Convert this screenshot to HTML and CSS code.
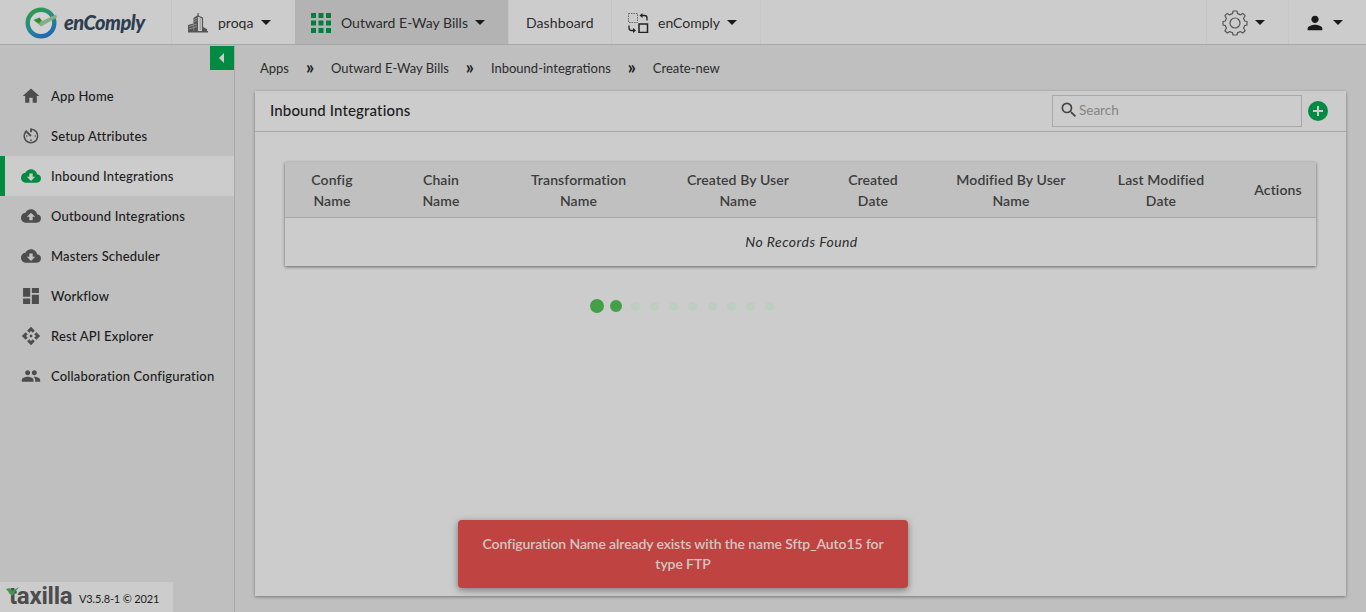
FILE: index.html
```html
<!DOCTYPE html>
<html lang="en">
<head>
<meta charset="utf-8">
<title>Inbound Integrations</title>
<link rel="stylesheet" href="styles.css">
</head>
<body>
<svg class="defs" width="0" height="0">
  <symbol id="cloud-down" viewBox="0 0 24 24"><path d="M19.35 10.04C18.67 6.59 15.64 4 12 4 9.11 4 6.6 5.64 5.35 8.04 2.34 8.36 0 10.91 0 14c0 3.31 2.69 6 6 6h13c2.76 0 5-2.24 5-5 0-2.64-2.05-4.78-4.65-4.96zM17 13l-5 5-5-5h3V9h4v4h3z"/></symbol>
</svg>
<header class="topbar">
  <div class="brand">
    <svg class="brand-mark" width="34" height="32" viewBox="0 0 34 32">
      <defs><linearGradient id="ring" x1="0.2" y1="0" x2="0.7" y2="1"><stop offset="0" stop-color="#2f9a4a"/><stop offset=".5" stop-color="#248b8c"/><stop offset="1" stop-color="#2068b4"/></linearGradient></defs>
      <circle cx="16" cy="16" r="13.3" fill="#d2d2d2" stroke="url(#ring)" stroke-width="4.4"/>
      <path d="M9 13.500l6 1.500L31 7.500l1 3-16 9z" fill="#85ad86"/>
      <path d="M8.500 13l6-2.500 2.500 3-3 3z" fill="#2e8b36"/>
    </svg>
    <span class="brand-name">enComply</span>
  </div>
  <div class="nav-item org">
    <svg width="20" height="20" viewBox="0 0 20 20" fill="#555">
      <path d="M5.500 5L10 2v16H5.500z"/><path d="M9.500 0h1.200v3h-1.200z"/><path d="M10 3l4.500 2v13" fill="none" stroke="#555" stroke-width="1.200"/><path d="M12.200 5v12" stroke="#888" stroke-width=".8"/><path d="M0 12l5.500-1.500V18H0zM15 14l4 2v2h-4zM0 18h20v1.500H0z"/>
      <path d="M1 13.500l8-2.500M1 16l8-2.500M6 8.500l3.500-1.500M6 6.500l3.500-1.500" stroke="#aaa" stroke-width=".7"/>
    </svg>
    <span>proqa</span><i class="caret"></i>
  </div>
  <div class="nav-item app">
    <svg width="20" height="20" viewBox="0 0 20 20" fill="#008040"><path d="M0 0h5v5H0zM7.500 0h5v5h-5zM15 0h5v5h-5zM0 7.500h5v5H0zM7.500 7.500h5v5h-5zM15 7.500h5v5h-5zM0 15h5v5H0zM7.500 15h5v5h-5zM15 15h5v5h-5z"/></svg>
    <span>Outward E-Way Bills</span><i class="caret"></i>
  </div>
  <div class="nav-item dash"><span>Dashboard</span></div>
  <div class="nav-item comply">
    <svg width="21" height="20" viewBox="0 0 21 20" fill="none" stroke="#222">
      <path d="M.5.500h9v9h-9z" stroke="#666" stroke-dasharray="1.500 1"/><path d="M11 11h8.500v8.500H11z" stroke-width="1.500"/>
      <path d="M13 2.500h3.500q2.500 0 2.500 2.500v2.500M1 12.500V15q0 2.500 2.500 2.500H6" stroke-width="1.300"/>
      <path d="M14.500 0v5l-3-2.500zM5 15v5l3-2.500z" fill="#222" stroke="none"/>
    </svg>
    <span>enComply</span><i class="caret"></i>
  </div>
  <div class="nav-item settings">
    <svg width="26" height="26" viewBox="0 0 26 26" fill="none" stroke="#555" stroke-width="1.200" stroke-linejoin="round">
      <path d="M11 1h4l.5 2.700q2 .4 2.700 1.300l2.600-1.600 2.300 2.300L21.500 8.500q.9 1.200 1.100 2.500L25 11.500v3.500l-2.400.6q-.3 1.400-1.100 2.400l1.600 2.700-2.400 2.300-2.500-1.500q-1.200.9-2.700 1.200L15 25h-4l-.5-2.300q-1.500-.3-2.700-1.200L5.300 23l-2.400-2.300L4.500 18q-.8-1-1.100-2.400L1 15v-3.500l2.400-.5q.2-1.300 1.100-2.500L2.900 5.700l2.300-2.300L7.800 5q.7-.9 2.700-1.300z"/><circle cx="13" cy="13" r="5"/>
    </svg><i class="caret"></i>
  </div>
  <div class="nav-item user">
    <svg width="22" height="22" viewBox="0 0 24 24" fill="#1a1a1a"><path d="M12 12c2.210 0 4-1.790 4-4s-1.790-4-4-4-4 1.790-4 4 1.790 4 4 4zm0 2c-2.670 0-8 1.340-8 4v2h16v-2c0-2.660-5.330-4-8-4z"/></svg><i class="caret"></i>
  </div>
</header>
<div class="layout">
  <aside class="sidebar">
    <div class="collapse-row"><button class="collapse" aria-label="Collapse"></button></div>
    <nav class="menu">
      <a class="menu-item"><svg viewBox="0 0 24 24"><path d="M10 20v-6h4v6h5v-8h3L12 3 2 12h3v8z"/></svg>App Home</a>
      <a class="menu-item"><svg viewBox="0 0 24 24"><path d="M12 3v4.500M5.500 5.700L12 12" fill="none" stroke="#4d4d4d" stroke-width="2.200"/><path d="M12 3.900a8.100 8.100 0 1 1-6.400 3" fill="none" stroke="#4d4d4d" stroke-width="2"/><circle cx="17" cy="12" r="1"/><circle cx="12" cy="17" r="1"/><circle cx="7" cy="12" r="1"/></svg>Setup Attributes</a>
      <a class="menu-item active"><svg viewBox="0 0 24 24"><use href="#cloud-down"/></svg>Inbound Integrations</a>
      <a class="menu-item"><svg viewBox="0 0 24 24"><path d="M19.350 10.040C18.670 6.590 15.640 4 12 4 9.110 4 6.600 5.640 5.350 8.040 2.340 8.360 0 10.910 0 14c0 3.310 2.690 6 6 6h13c2.760 0 5-2.240 5-5 0-2.640-2.050-4.780-4.650-4.960zM14 13v4h-4v-4H7l5-5 5 5h-3z"/></svg>Outbound Integrations</a>
      <a class="menu-item"><svg viewBox="0 0 24 24"><use href="#cloud-down"/></svg>Masters Scheduler</a>
      <a class="menu-item"><svg viewBox="0 0 24 24"><path d="M2.500 2.500h8.500v10.500H2.500zM13 2.500h8.500v6H13zM2.500 15h8.500v6.500H2.500zM13 10.500h8.500v11H13z"/></svg>Workflow</a>
      <a class="menu-item"><svg viewBox="0 0 24 24"><path d="M14 12l-2 2-2-2 2-2zM12 6l2.120 2.120 2.500-2.500L12 1 7.380 5.620l2.500 2.500zM6 12l2.120-2.120-2.500-2.500L1 12l4.620 4.620 2.500-2.500zM18 12l-2.120 2.120 2.500 2.500L23 12l-4.620-4.620-2.500 2.500zM12 18l-2.120-2.120-2.500 2.500L12 23l4.620-4.620-2.500-2.500z"/></svg>Rest API Explorer</a>
      <a class="menu-item"><svg viewBox="0 0 24 24"><path d="M16 11c1.660 0 2.990-1.340 2.990-3S17.660 5 16 5s-3 1.340-3 3 1.340 3 3 3zM8 11c1.660 0 2.990-1.340 2.990-3S9.660 5 8 5 5 6.340 5 8s1.340 3 3 3zM8 13c-2.330 0-7 1.170-7 3.500V19h14v-2.500C15 14.170 10.330 13 8 13zM16 13c-.29 0-.62.020-.97.050 1.160.84 1.970 1.970 1.970 3.450V19h6v-2.500c0-2.330-4.670-3.500-7-3.500z"/></svg>Collaboration Configuration</a>
    </nav>
    <footer class="version">
      <svg class="tick" width="14" height="9" viewBox="0 0 14 9"><path d="M0 2l4-1 2 3 7-4-7 9z" fill="#40964c"/></svg>
      <span class="taxilla">taxilla</span><span class="version-text">V3.5.8-1 © 2021</span>
    </footer>
  </aside>
  <main class="content">
    <div class="crumbs"><span>Apps</span><b>»</b><span>Outward E-Way Bills</span><b>»</b><span>Inbound-integrations</span><b>»</b><span>Create-new</span></div>
    <section class="panel">
      <div class="panel-head">
        <h1>Inbound Integrations</h1>
        <div class="search"><svg width="20" height="20" viewBox="0 0 24 24" fill="#444"><path d="M15.500 14h-.79l-.28-.27A6.470 6.470 0 0 0 16 9.500 6.500 6.500 0 1 0 9.500 16c1.610 0 3.090-.59 4.230-1.570l.27.28v.79l5 4.990L20.490 19zm-6 0C7.010 14 5 11.990 5 9.500S7.010 5 9.500 5 14 7.010 14 9.500 11.990 14 9.500 14z"/></svg><span>Search</span></div>
        <svg class="add" width="20" height="20" viewBox="0 0 20 20"><circle cx="10" cy="10" r="10" fill="#008a42"/><path d="M10 5v10M5 10h10" stroke="#ccc" stroke-width="2"/></svg>
      </div>
      <div class="table">
        <div class="thead">
          <span>Config<br>Name</span><span>Chain<br>Name</span><span>Transformation<br>Name</span><span>Created By User<br>Name</span><span>Created<br>Date</span><span>Modified By User<br>Name</span><span>Last Modified<br>Date</span><span>Actions</span>
        </div>
        <div class="empty"><span>No Records Found</span></div>
      </div>
      <div class="loader"><i class="big"></i><i class="mid"></i><i></i><i></i><i></i><i></i><i></i><i></i><i></i><i></i></div>
    </section>
  </main>
</div>
<div class="toast"><p>Configuration Name already exists with the name Sftp_Auto15 for<br>type FTP</p></div>
</body>
</html>
```
FILE: styles.css
```css
* { box-sizing: border-box; }
body { margin: 0; width: 1366px; height: 612px; overflow: hidden; display: flex; flex-direction: column; background: #bfbfbf; color: #1c1c1c; font: 14px Lato, sans-serif; }
.defs { position: absolute; }
.topbar { display: flex; height: 45px; flex: none; background: #ccc; border-bottom: 1px solid #a8a8a8; }
.brand { width: 171px; padding: 1px 0 0 25px; display: flex; align-items: center; gap: 5px; }
.brand-name { padding-bottom: 2px; color: #2b3d4f; font-size: 20px; font-weight: 900; font-style: italic; letter-spacing: -.5px; white-space: nowrap; }
.nav-item { display: flex; align-items: center; border-left: 1px solid #c5c5c5; height: 44px; padding-top: 1px; white-space: nowrap; color: #2c2c2c; }
.nav-item svg { flex: none; }
.caret { width: 0; height: 0; border: 5px solid transparent; border-top-color: #1a1a1a; border-bottom: 0; margin-left: auto; }
.org { width: 124px; padding: 1px 24px 0 16px; }
.org span { margin-left: 10px; }
.app { width: 213px; background: #b3b3b3; padding: 1px 23px 0 16px; border-color: #b3b3b3; }
.app svg { margin-left: -1px; }
.app span { margin-left: 10px; }
.dash { width: 103px; padding-left: 17px; letter-spacing: .1px; }
.comply { width: 150px; padding: 1px 23px 0 16px; border-right: 1px solid #c5c5c5; }
.comply span { margin-left: 9px; }
.settings { margin-left: auto; width: 82px; padding: 1px 23px 0 15px; }
.user { width: 78px; padding: 1px 23px 0 15px; }
.layout { display: flex; flex: 1; min-height: 0; }
.sidebar { width: 235px; border-right: 1px solid #a8a8a8; display: flex; flex-direction: column; }
.collapse-row { display: flex; justify-content: flex-end; height: 31px; padding-top: 1px; }
.collapse { width: 24px; height: 24px; border: 0; padding: 0; background: #008a42; display: flex; align-items: center; justify-content: center; }
.collapse::before { content: ""; border: 5px solid transparent; border-right-color: #ccc; border-left: 0; margin-right: 1px; }
.menu-item { height: 40px; display: flex; align-items: center; padding-left: 21px; gap: 10px; font-size: 13px; letter-spacing: .17px; font-weight: 500; white-space: nowrap; }
.menu-item svg { width: 20px; height: 20px; fill: #4d4d4d; }
.menu-item.active { background: #ccc; border-left: 5px solid #008a42; padding-left: 16px; }
.menu-item.active svg { fill: #008a42; }
.version { margin-top: auto; width: 173px; height: 30px; background: #ccc; display: flex; align-items: center; padding-left: 9px; position: relative; }
.taxilla { width: 63px; font: 700 24px Roboto, sans-serif; letter-spacing: -.25px; color: #4c4c4c; line-height: 28px; padding-bottom: 2px; }
.tick { position: absolute; left: 6px; top: 5px; }
.version-text { font-size: 11px; margin-left: 7px; padding-top: 3px; white-space: nowrap; letter-spacing: -.15px; }
.content { flex: 1; padding: 0 20px 16px; display: flex; flex-direction: column; }
.crumbs { height: 46px; display: flex; align-items: center; padding-left: 5px; font-size: 13px; color: #2c2c2c; white-space: nowrap; }
.crumbs b { width: 42px; text-align: center; font-size: 18px; line-height: 14px; padding-bottom: 2px; color: #1c1c1c; }
.panel { flex: 1; background: #ccc; box-shadow: 0 1px 3px #777; display: flex; flex-direction: column; }
.panel-head { height: 41px; border-bottom: 1px solid #a8a8a8; display: flex; align-items: center; padding: 0 18px 0 15px; }
h1 { margin: 0 0 2px; font-size: 15px; font-weight: 500; letter-spacing: .15px; flex: 1; }
.search { width: 250px; height: 32px; border: 1px solid #a8a8a8; display: flex; align-items: center; padding: 0 0 2px 6px; margin-right: -1px; color: #858585; font-size: 13.500px; }
.add { margin-left: 7px; }
.table { margin: 30px 30px 0; height: 104px; box-shadow: 0 1px 3px #666; }
.thead { height: 56px; display: grid; grid-template-columns: 94px 124px 151px 168px 102px 174px 126px 1fr; background: #c0c0c0; border-bottom: 1px solid #a8a8a8; align-items: center; text-align: center; font-weight: 600; letter-spacing: .1px; line-height: 21px; color: #3c3c3c; }
.thead span:last-child { padding-left: 16px; padding-bottom: 1px; }
.empty { height: 48px; display: flex; align-items: center; justify-content: center; font-style: italic; letter-spacing: .45px; color: #2c2c2c; padding: 0 0 1px 2px; }
.loader { margin: 32px 0 0 335px; height: 16px; display: flex; align-items: center; }
.loader i { width: 9px; height: 9px; border-radius: 50%; background: #bccfbe; margin-right: 10.150px; flex: none; }
.loader .big { width: 14px; height: 14px; background: #43a047; margin-right: 6px; }
.loader .mid { width: 12px; height: 12px; background: #43a047; margin-right: 9px; }
.toast { position: absolute; left: 458px; top: 520px; width: 450px; height: 68px; border-radius: 4px; background: #bf4341; box-shadow: 0 2px 7px #777; color: #d5c5c5; display: flex; align-items: center; justify-content: center; text-align: center; font-weight: 600; letter-spacing: -.1px; line-height: 20px; }
.toast p { margin: 0; white-space: nowrap; }
```
